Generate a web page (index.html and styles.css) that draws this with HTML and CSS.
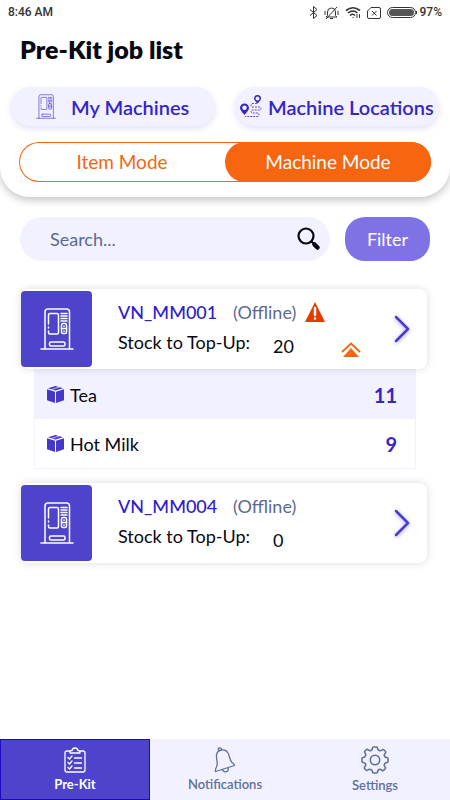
FILE: index.html
```html
<!DOCTYPE html>
<html lang="en">
<head>
<meta charset="utf-8">
<meta name="viewport" content="width=device-width, initial-scale=1">
<title>Pre-Kit job list</title>
<link rel="stylesheet" href="styles.css">
</head>
<body>
<svg class="defs" aria-hidden="true">
  <symbol id="machine" viewBox="0 0 34 42">
    <g fill="none" stroke="currentColor" stroke-linecap="round" stroke-linejoin="round">
      <path d="M1 41H33M5 41V4Q5 1 8 1H26.500Q29.500 1 29.500 4V41"/>
      <path d="M8.500 16V7Q8.500 5.500 10 5.500H17Q18.500 5.500 18.500 7V24.500Q18.500 26 17 26H10Q8.500 26 8.500 24.500V23M8.500 19V20"/>
      <path d="M21 5.500H27M21 8H27M21 10.500H27M21 13H27"/>
      <rect x="21.500" y="15.500" width="5" height="10" rx="1.500"/><path d="M21.500 20.500H26.500M24 18V18.200M24 23V23.200"/>
      <rect x="9.500" y="34" width="15.500" height="4" rx="1.500"/>
    </g>
  </symbol>
  <symbol id="box" viewBox="0 0 16 16">
    <path fill="currentColor" d="M8 0L15 2L8 4.300L1 2ZM0 3L7.500 5.300V16L0 13.500ZM16 3L8.500 5.300V16L16 13.500Z"/>
    <path stroke="#fff" stroke-width=".6" d="M4.500 3.200L11.500 1"/>
  </symbol>
  <symbol id="chevron" viewBox="0 0 16 28">
    <path d="M2 2L14 14L2 26" fill="none" stroke="currentColor" stroke-width="2.500" stroke-linecap="round" stroke-linejoin="round"/>
  </symbol>
</svg>

<header class="top">
  <div class="status">
    <span>8:46 AM</span>
    <div class="status-icons">
      <svg width="9" height="13" viewBox="0 0 9 13" fill="none" stroke="currentColor"><path d="M1 3.500L8 9.500L4.500 12.500V.5L8 3.500L1 9.500"/></svg>
      <svg width="15" height="14" viewBox="0 0 15 14" fill="none" stroke="currentColor"><path d="M3.500 9.500V6Q3.500 2 7.500 2T11.500 6V9.500L13 11H2ZM6 12.500H9M2 13L13 1M1 5V9M14 5V9"/></svg>
      <svg width="16" height="13" viewBox="0 0 16 13" fill="none" stroke="currentColor" stroke-width="1.600"><path d="M1 4.500Q8-1 15 4.500M3 7Q8 3 12.500 7M5 9.500Q8 7 10 9.500"/><path stroke-width="1" d="M7.500 11.500H8.500M12 8V12M14.500 8V12"/></svg>
      <svg width="14" height="12" viewBox="0 0 14 12" fill="none" stroke="currentColor"><path d="M4 .5H12Q13.500.5 13.500 2V10Q13.500 11.500 12 11.500H2Q.5 11.500 .5 10V4ZM5 4L9.500 8.500M9.500 4L5 8.500"/></svg>
      <svg width="30" height="11" viewBox="0 0 30 11"><rect x=".5" y=".5" width="28" height="10" rx="5" fill="none" stroke="currentColor"/><rect x="2" y="2" width="25" height="7" rx="3.500" fill="#555"/><path d="M29.500 4V7" stroke="currentColor"/></svg>
      <span>97%</span>
    </div>
  </div>
  <h1>Pre-Kit job list</h1>
  <nav class="shortcuts">
    <button class="pill machines" type="button">
      <svg width="20" height="25"><use href="#machine"/></svg>
      <span>My Machines</span>
    </button>
    <button class="pill locations" type="button">
      <svg width="22" height="23" viewBox="0 0 22 23">
        <path fill="currentColor" fill-rule="evenodd" d="M4.500 20Q0 15 0 13A4.500 4.500 0 0 1 9 13Q9 15 4.500 20ZM4.500 10.500A2.300 2.300 0 1 0 4.500 15.100A2.300 2.300 0 1 0 4.500 10.500ZM17.500 8.500Q14 5 14 3.500A3.500 3.500 0 0 1 21 3.500Q21 5 17.500 8.500ZM17.500 1.500A2 2 0 1 0 17.500 5.500A2 2 0 1 0 17.500 1.500Z"/>
        <path fill="none" stroke="currentColor" stroke-width=".8" stroke-dasharray="2 1" d="M17 8.500H12Q10 10 12 12H20Q22 13.500 20 15H12Q10 16.500 12 18H18Q20 19.500 18 21.500H5"/>
      </svg>
      <span>Machine Locations</span>
    </button>
  </nav>
  <div class="modes">
    <button type="button">Item Mode</button>
    <button class="on" type="button">Machine Mode</button>
  </div>
</header>

<main>
  <form class="search-row">
    <div class="search">
      <input type="text" placeholder="Search..." aria-label="Search">
      <svg width="24" height="24" viewBox="0 0 24 24" fill="none" stroke="#050510"><circle cx="9" cy="9" r="7.500" stroke-width="2.200"/><path stroke-width="2" d="M14 14L17 17"/><path stroke-width="4.500" stroke-linecap="round" d="M17.500 17.500L20.500 20.500"/></svg>
    </div>
    <button class="filter" type="button">Filter</button>
  </form>

  <section class="group">
    <article class="card">
      <div class="thumb"><svg width="34" height="42"><use href="#machine"/></svg></div>
      <div class="info">
        <div class="line">
          <h2>VN_MM001</h2><span class="state">(Offline)</span>
          <svg width="22" height="20" viewBox="0 0 22 20" role="img" aria-label="Warning"><path fill="#e63b00" d="M11 0L21 20H1Z"/><path stroke="#fff" stroke-width="2.400" stroke-linecap="round" d="M11 6V13M11 16.500V16.600"/></svg>
        </div>
        <div class="line">
          <span class="label">Stock to Top-Up:</span><span class="count">20</span>
          <button class="fold" type="button" aria-label="Collapse items"><svg width="20" height="16" viewBox="0 0 20 16"><path fill="none" stroke="#f76511" stroke-width="1.800" d="M1 10L10 1.500L19 10"/><path fill="#f76511" d="M10 6L18 15H2Z"/></svg></button>
        </div>
      </div>
      <a class="go" href="#vn-mm001" aria-label="Open VN_MM001"><svg width="16" height="28"><use href="#chevron"/></svg></a>
    </article>
    <ul class="items">
      <li><svg width="17" height="17"><use href="#box"/></svg><span>Tea</span><b>11</b></li>
      <li><svg width="17" height="17"><use href="#box"/></svg><span>Hot Milk</span><b>9</b></li>
    </ul>
  </section>

  <section class="group">
    <article class="card">
      <div class="thumb"><svg width="34" height="42"><use href="#machine"/></svg></div>
      <div class="info">
        <div class="line"><h2>VN_MM004</h2><span class="state">(Offline)</span></div>
        <div class="line"><span class="label">Stock to Top-Up:</span><span class="count">0</span></div>
      </div>
      <a class="go" href="#vn-mm004" aria-label="Open VN_MM004"><svg width="16" height="28"><use href="#chevron"/></svg></a>
    </article>
  </section>
</main>

<nav class="tabs">
  <a class="active" href="#prekit">
    <svg width="22" height="26" viewBox="0 0 22 26" fill="none" stroke="currentColor" stroke-width="1.300" stroke-linecap="round" stroke-linejoin="round"><path d="M6 4H3Q1 4 1 6V23Q1 25 3 25H19Q21 25 21 23V6Q21 4 19 4H16"/><path d="M6 6V4.500Q6 3.500 8 3.500Q8.500 1 11 1T14 3.500Q16 3.500 16 4.500V6ZM4 10.500L5.500 12L8 9M4 15.500L5.500 17L8 14M4 20.500L5.500 22L8 19M10.500 11H17.500M10.500 16H17.500M10.500 21H17.500"/></svg>
    <span>Pre-Kit</span>
  </a>
  <a href="#notifications">
    <svg width="22" height="26" viewBox="0 0 22 26" fill="none" stroke="currentColor" stroke-width="1.300" stroke-linecap="round" stroke-linejoin="round"><path d="M1.500 24.500L20.500 18.500Q20.500 17 18 15.500C15.500 13.500 16 9 14 6Q12 2.500 8 3Q3 3.500 2.500 8C2 13 4.500 16 2.500 20Q1 22.500 1.500 24.500ZM4.500 3.500Q3.500 1 5.500 1Q7.500.5 7.500 3M8.500 23Q11 26.500 14 23.500Q14.500 22.500 14 21"/></svg>
    <span>Notifications</span>
  </a>
  <a href="#settings">
    <svg width="28" height="28" viewBox="0 0 28 28" fill="none" stroke="currentColor" stroke-width="1.600" stroke-linejoin="round"><circle cx="14" cy="14" r="4.700"/><path d="M11.500 2Q11.500 1 12.500 1H15.500Q16.500 1 16.500 2C16.500 4.500 19.500 5.500 21 4Q22 3 23 4L24.500 5.500Q25 6.500 24 7.500C22.500 9 23.500 11.500 26 11.500Q27 11.500 27 12.500V15.500Q27 16.500 26 16.500C23.500 16.500 22.500 19.500 24 21Q25 22 24 23L22.500 24.500Q21.500 25 20.500 24C19 22.500 16.500 23.500 16.500 26Q16.500 27 15.500 27H12.500Q11.500 27 11.500 26C11.500 23.500 8.500 22.500 7 24Q6 25 5 24L3.500 22.500Q3 21.500 4 20.500C5.500 19 4.500 16.500 2 16.500Q1 16.500 1 15.500V12.500Q1 11.500 2 11.500C4.500 11.500 5.500 8.500 4 7Q3 6 4 5L5.500 3.500Q6.500 3 7.500 4C9 5.500 11.500 4.500 11.500 2Z"/></svg>
    <span>Settings</span>
  </a>
</nav>
</body>
</html>
```

FILE: styles.css
```css
* { box-sizing: border-box; }
body {
  margin: 0;
  min-height: 100vh;
  display: flex;
  flex-direction: column;
  background: #fff;
  color: #080812;
  font: 18px/24px Lato, "Liberation Sans", sans-serif;
}
button, input { font: inherit; color: inherit; border: 0; padding: 0; background: none; }
a { color: inherit; text-decoration: none; }
h1, h2 { margin: 0; }
svg { display: block; flex: none; }
.defs { position: absolute; width: 0; height: 0; }

.top {
  padding-bottom: 15px;
  border-radius: 0 0 30px 30px;
  background: #fff;
  box-shadow: 0 3px 8px rgba(0, 0, 0, .24);
}
.status {
  display: flex;
  justify-content: space-between;
  align-items: center;
  height: 25px;
  padding: 0 8px;
  color: #333;
  font: 500 12px/25px Roboto, sans-serif;
}
.status-icons { display: flex; align-items: center; gap: 6px; }
.status-icons span { margin-left: -3px; }
h1 { padding: 9px 20px 0; font-size: 25px; line-height: 30px; font-weight: 800; }
.shortcuts {
  display: grid;
  grid-template-columns: 1fr 1fr;
  gap: 20px;
  padding: 23px 11px 0;
}
.pill {
  display: flex;
  align-items: center;
  height: 39px;
  border-radius: 20px;
  background: #f2f1ff;
  box-shadow: 0 3px 6px rgba(78, 68, 204, .16);
  color: #3526c4;
  font-size: 20px;
  font-weight: 600;
  white-space: nowrap;
}
.machines { padding-left: 25px; gap: 15px; }
.locations { padding-left: 5px; gap: 6px; }
.modes {
  display: grid;
  grid-template-columns: 1fr 1fr;
  margin: 16px 19px 0;
  height: 40px;
  border-radius: 20px;
  box-shadow: inset 0 0 0 1px #f76511;
  color: #f76511;
  font-size: 19px;
}
.modes .on { border-radius: 20px; background: #f76511; color: #fff; }

main { flex: 1; padding: 20px 20px 30px; }
.search-row { display: flex; gap: 15px; height: 44px; margin-bottom: 28px; }
.search {
  flex: 1;
  min-width: 0;
  display: flex;
  align-items: center;
  padding: 0 9px 0 30px;
  border-radius: 22px;
  background: #f2f1ff;
}
.search input { flex: 1; min-width: 0; outline: none; }
.search input::placeholder { color: #5a6a92; opacity: 1; }
.filter { width: 85px; border-radius: 20px; background: #7e72e5; color: #fff; }

.group { margin-bottom: 14px; }
.card {
  display: flex;
  align-items: center;
  height: 80px;
  margin: 0 3px 0 1px;
  border-radius: 8px;
  background: #fff;
  box-shadow: 0 0 8px rgba(0, 0, 0, .14);
}
.thumb {
  display: grid;
  place-items: center;
  width: 71px;
  height: 76px;
  border-radius: 4px;
  background: #4e44cc;
  color: #fff;
}
.thumb svg { stroke-width: 1.5; }
.info { flex: 1; padding: 0 0 2px 26px; }
.line { display: flex; align-items: center; height: 32px; }
h2 { width: 115px; color: #3020c8; font-size: 18px; font-weight: 500; }
.state { width: 71px; color: #5a6a92; }
.label { width: 155px; padding-bottom: 4px; white-space: nowrap; }
.count { width: 68px; padding-top: 4px; }
.fold { padding-top: 12px; }
.go { padding: 10px 17px; color: #4a3cce; filter: drop-shadow(0 1px 2px rgba(78, 68, 204, .5)); }

.items {
  position: relative;
  z-index: -1;
  list-style: none;
  margin: 0 14px;
  padding: 0;
  border: 1px solid #f2f1ff;
}
.items li { display: flex; align-items: center; gap: 6px; height: 49px; padding: 0 18px 0 12px; }
.items li:first-child { background: #f2f1ff; }
.items svg { color: #4437ca; }
.items b { margin-left: auto; color: #3526c4; font-size: 20px; font-weight: 700; }

.tabs {
  display: grid;
  grid-template-columns: repeat(3, 1fr);
  height: 61px;
  background: #f2f1ff;
  color: #5f7099;
  font-size: 13px;
  line-height: 20px;
  font-weight: 600;
}
.tabs a { display: flex; flex-direction: column; align-items: center; gap: 1px; padding-top: 8px; }
.tabs a:last-child { padding-top: 7px; }
.tabs .active { background: #4e44cc; color: #fff; font-weight: 700; box-shadow: inset 0 0 0 1px #1c0bbd; }
```
